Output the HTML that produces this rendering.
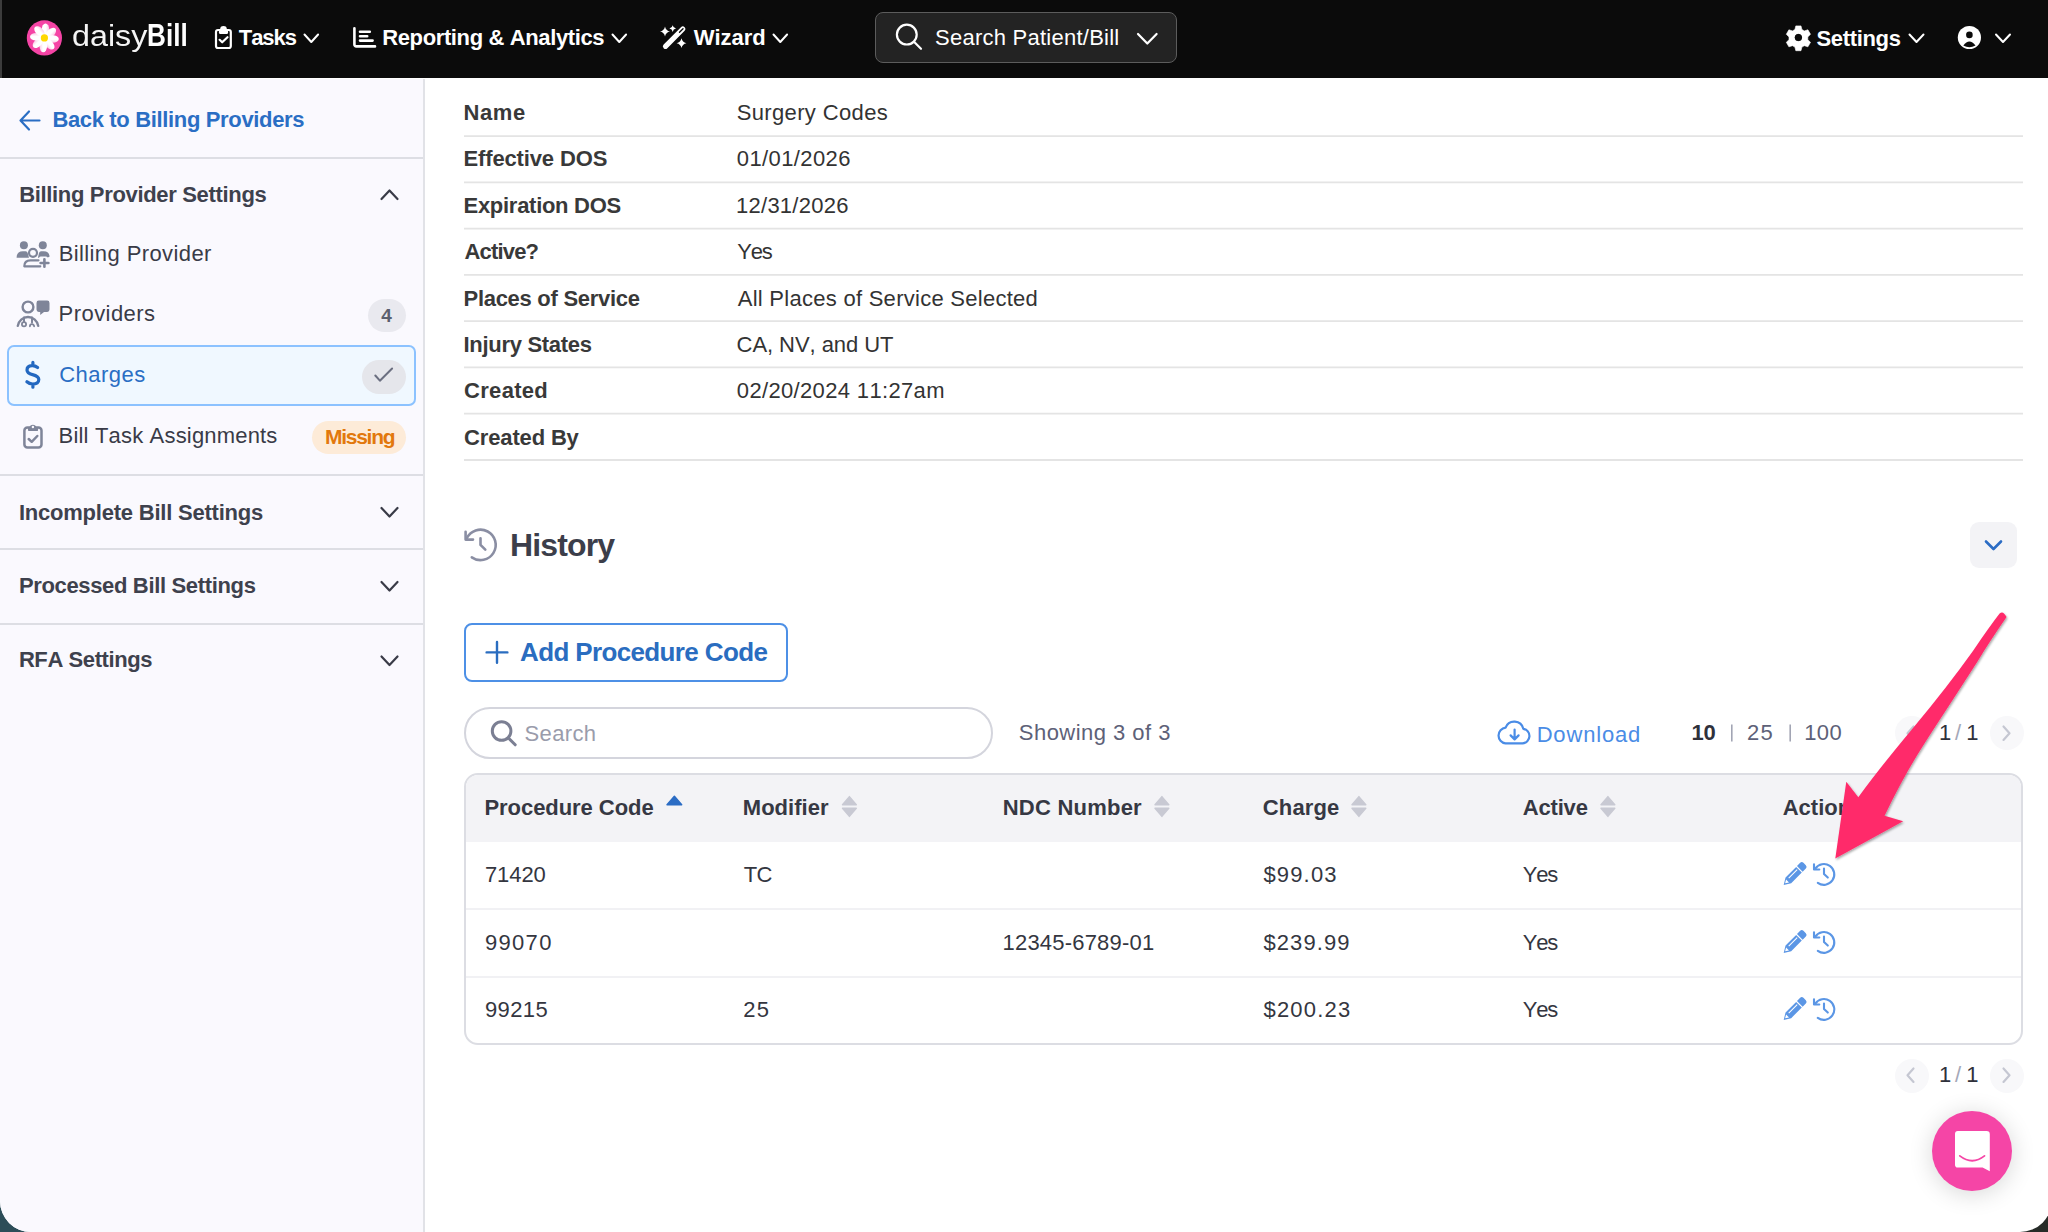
<!DOCTYPE html>
<html><head><meta charset="utf-8"><title>daisyBill</title>
<style>
html,body{margin:0;padding:0;}
body{width:2048px;height:1232px;overflow:hidden;position:relative;background:#2c4d58;font-family:"Liberation Sans",sans-serif;}
#win{position:absolute;left:0;top:0;width:2052px;height:1232px;background:#ffffff;border-radius:0 0 32px 31px;overflow:hidden;}
.a{position:absolute;}
.t{position:absolute;white-space:nowrap;font-family:"Liberation Sans",sans-serif;font-kerning:none;font-feature-settings:"kern" 0,"liga" 0;}
svg{position:absolute;overflow:visible;}
.hl{position:absolute;left:464px;width:1559px;height:2px;background:#e6e6e6;}
.sd{position:absolute;left:0;width:423px;height:2px;background:#dddee4;}
</style></head><body>
<div class="a" style="left:1900px;top:1150px;width:148px;height:82px;background:#262b28;"></div>
<div id="win">
<!-- header -->
<div class="a" style="left:0;top:0;width:2052px;height:78px;background:#0b0b0b;"></div>
<div class="a" style="left:0;top:0;width:2px;height:78px;background:#3c3c3c;"></div>
<!-- sidebar -->
<div class="a" style="left:0;top:79px;width:423px;height:1153px;background:#faf9fe;"></div>
<div class="a" style="left:423px;top:79px;width:2px;height:1153px;background:#e1e2e7;"></div>
<div class="sd" style="top:157px"></div>
<div class="sd" style="top:474px"></div>
<div class="sd" style="top:548px"></div>
<div class="sd" style="top:623px"></div>
<div class="a" style="left:7px;top:345px;width:405px;height:57px;border:2px solid #8cc2ff;border-radius:7px;background:#f0f8ff;"></div>
<div class="a" style="left:368px;top:299px;width:38px;height:33px;border-radius:17px;background:#e9e9ef;"></div>
<div class="a" style="left:362px;top:360px;width:44px;height:34px;border-radius:17px;background:#e5e6eb;"></div>
<div class="a" style="left:312px;top:421px;width:94px;height:33px;border-radius:17px;background:#fdebd8;"></div>
<!-- details -->
<svg style="left:0;top:0" width="2052" height="500"><path d="M464 136.10 H2023 M464 182.37 H2023 M464 228.64 H2023 M464 274.91 H2023 M464 321.18 H2023 M464 367.45 H2023 M464 413.72 H2023 M464 459.99 H2023" stroke="#e4e4e4" stroke-width="1.8"/></svg>
<!-- collapse btn -->
<div class="a" style="left:1970px;top:522px;width:47px;height:46px;border-radius:9px;background:#f3f3f6;"></div>
<!-- add button -->
<div class="a" style="left:464px;top:623px;width:320px;height:55px;border:2px solid #4d90e6;border-radius:8px;"></div>
<!-- search input -->
<div class="a" style="left:464px;top:707px;width:525px;height:48px;border:2px solid #d4d5dd;border-radius:26px;"></div>
<!-- page size separators -->
<svg style="left:0;top:0" width="2052" height="1232"><path d="M1731.8 724.5 V741.5 M1790.2 724.5 V741.5" stroke="#a2a5b4" stroke-width="1.6"/></svg>
<!-- pager circles -->
<div class="a" style="left:1895px;top:716px;width:34px;height:34px;border-radius:50%;background:#f8f8fa;"></div>
<div class="a" style="left:1990px;top:716px;width:34px;height:34px;border-radius:50%;background:#f8f8fa;"></div>
<div class="a" style="left:1895px;top:1059px;width:34px;height:34px;border-radius:50%;background:#f8f8fa;"></div>
<div class="a" style="left:1990px;top:1059px;width:34px;height:34px;border-radius:50%;background:#f8f8fa;"></div>
<!-- table -->
<div class="a" style="left:464px;top:773px;width:1555px;height:268px;border:2px solid #dcdde3;border-radius:14px;overflow:hidden;background:#fff;">
  <div class="a" style="left:0;top:0;width:1555px;height:67px;background:#f3f3f6;"></div>
  <div class="a" style="left:0;top:133px;width:1555px;height:2px;background:#f1f1f4;"></div>
  <div class="a" style="left:0;top:200.5px;width:1555px;height:2px;background:#f1f1f4;"></div>
</div>
<div class="t" style="left:71.66px;top:21.20px;font-size:30px;line-height:30px;color:#f4f4f4;transform:scaleX(1.0754);transform-origin:0 0;">daisy</div>
<div class="t" style="left:147.01px;top:20.35px;font-size:31px;line-height:31px;color:#ffffff;font-weight:700;transform:scaleX(0.8432);transform-origin:0 0;">Bill</div>
<!-- logo flower -->
<svg style="left:0;top:0" width="100" height="78">
  <defs><linearGradient id="pg" x1="0" y1="0" x2="1" y2="0"><stop offset="0" stop-color="#ffffff"/><stop offset="0.55" stop-color="#ffffff"/><stop offset="1" stop-color="#fbc9e4"/></linearGradient></defs>
  <circle cx="44.4" cy="37.9" r="17.6" fill="#f544a5"/>
  <g transform="translate(44.4 37.9)"><ellipse cx="1.1" cy="-8.1" rx="3.8" ry="6.3" fill="url(#pg)" transform="rotate(0)"/><ellipse cx="1.1" cy="-8.1" rx="3.8" ry="6.3" fill="url(#pg)" transform="rotate(45)"/><ellipse cx="1.1" cy="-8.1" rx="3.8" ry="6.3" fill="url(#pg)" transform="rotate(90)"/><ellipse cx="1.1" cy="-8.1" rx="3.8" ry="6.3" fill="url(#pg)" transform="rotate(135)"/><ellipse cx="1.1" cy="-8.1" rx="3.8" ry="6.3" fill="url(#pg)" transform="rotate(180)"/><ellipse cx="1.1" cy="-8.1" rx="3.8" ry="6.3" fill="url(#pg)" transform="rotate(225)"/><ellipse cx="1.1" cy="-8.1" rx="3.8" ry="6.3" fill="url(#pg)" transform="rotate(270)"/><ellipse cx="1.1" cy="-8.1" rx="3.8" ry="6.3" fill="url(#pg)" transform="rotate(315)"/>
    <circle cx="0" cy="0" r="3.6" fill="#ffd800"/>
  </g>
</svg>
<!-- tasks clipboard -->
<svg style="left:0;top:0" width="800" height="78" fill="none" stroke="#fff" stroke-width="2.2" stroke-linecap="round" stroke-linejoin="round">
  <rect x="216" y="30" width="14.8" height="18" rx="2"/>
  <path d="M220 30.5 v2.3 h7 v-2.3 M221.2 29.5 a2.3 2.3 0 0 1 4.6 0" fill="#fff"/>
  <path d="M219.6 39.8 l2.6 2.5 l5.3 -5.1"/>
  <!-- chevrons -->
  <path d="M304.5 34.5 l6.8 7.5 l6.8 -7.5" stroke-width="2"/>
  <path d="M612.5 34.5 l6.8 7.5 l6.8 -7.5" stroke-width="2"/>
  <path d="M773.5 34.5 l6.8 7.5 l6.8 -7.5" stroke-width="2"/>
  <!-- reporting -->
  <path d="M354.4 28.3 V44.6 a1.8 1.8 0 0 0 1.8 1.8 H375" stroke-width="2.6"/>
  <path d="M360 31.7 H369.8 M360 36.3 H367.2 M360 40.6 H372.6" stroke-width="2.6"/>
  <!-- wizard wand -->
  <path d="M665.5 46.3 L682.8 29" stroke-width="5.2"/>
  <path d="M679.5 32.3 L683 28.8" stroke="#0b0b0b" stroke-width="1.4"/>
</svg>
<svg style="left:0;top:0" width="800" height="78" fill="#fff">
  <path d="M665 26.5 Q665.8 30.7 670 31.5 Q665.8 32.3 665 36.5 Q664.2 32.3 660 31.5 Q664.2 30.7 665 26.5Z"/>
  <path d="M672.7 25.3 Q673.2 28.1 676 28.6 Q673.2 29.1 672.7 31.9 Q672.2 29.1 669.4 28.6 Q672.2 28.1 672.7 25.3Z"/>
  <path d="M681.5 38.3 Q682.3 42.4 686.4 43.2 Q682.3 44 681.5 48.1 Q680.7 44 676.6 43.2 Q680.7 42.4 681.5 38.3Z"/>
</svg>
<!-- search box -->
<div class="a" style="left:875px;top:12px;width:300px;height:49px;border:1.5px solid #5c5c5c;border-radius:8px;background:#232323;"></div>
<svg style="left:0;top:0" width="1300" height="78" fill="none" stroke="#fff" stroke-width="2.2" stroke-linecap="round" stroke-linejoin="round">
  <circle cx="906.8" cy="34.6" r="9.9"/>
  <path d="M914 41.8 L921 48.8"/>
  <path d="M1138 34 l9.3 9.5 l9.3 -9.5"/>
</svg>
<!-- settings gear -->
<svg style="left:1786px;top:25px" width="26" height="26" viewBox="0 0 26 26">
  <g transform="translate(12.4 12.5)">
    <path fill="#fff" fill-rule="evenodd" d="M-2.6 -11.6 h5.2 l0.9 3.6 l2.4 1.4 l3.6 -1.1 l2.6 4.5 l-2.7 2.6 v2.8 l2.7 2.6 l-2.6 4.5 l-3.6 -1.1 l-2.4 1.4 l-0.9 3.6 h-5.2 l-0.9 -3.6 l-2.4 -1.4 l-3.6 1.1 l-2.6 -4.5 l2.7 -2.6 v-2.8 l-2.7 -2.6 l2.6 -4.5 l3.6 1.1 l2.4 -1.4 Z M0 -3.7 a3.7 3.7 0 1 0 0.01 0Z" stroke="#fff" stroke-width="0.6" stroke-linejoin="round"/>
    <circle r="3.6" fill="#0b0b0b"/>
  </g>
</svg>
<svg style="left:0;top:0" width="2052" height="78" fill="none" stroke="#fff" stroke-width="2" stroke-linecap="round" stroke-linejoin="round">
  <path d="M1909.5 34.5 l7 7.5 l7 -7.5"/>
  <path d="M1996 34.5 l7 7.5 l7 -7.5"/>
</svg>
<!-- user circle -->
<svg style="left:1957px;top:25px" width="25" height="25" viewBox="0 0 25 25">
  <circle cx="12.4" cy="12.5" r="11.6" fill="#fff"/>
  <circle cx="12.4" cy="9.9" r="3.3" fill="#0b0b0b"/>
  <path d="M6.3 20.5 Q12.4 12.5 18.5 20.5 Q12.4 23.8 6.3 20.5Z" fill="#0b0b0b"/>
</svg>

<!-- sidebar icons -->
<svg style="left:0;top:0" width="423" height="700" fill="none" stroke-linecap="round" stroke-linejoin="round">
  <!-- back arrow -->
  <path d="M21 120.5 H39.5 M29 111.5 L20.5 120.5 L29 129.5" stroke="#2a6ec4" stroke-width="2.2"/>
  <!-- chevrons -->
  <path d="M381.5 199 l8 -8.5 l8 8.5" stroke="#393b47" stroke-width="2.2"/>
  <path d="M381.5 508 l8 8.5 l8 -8.5" stroke="#393b47" stroke-width="2.2"/>
  <path d="M381.5 582 l8 8.5 l8 -8.5" stroke="#393b47" stroke-width="2.2"/>
  <path d="M381.5 656.5 l8 8.5 l8 -8.5" stroke="#393b47" stroke-width="2.2"/>
  <!-- billing provider icon -->
  <g fill="#7f8599">
    <circle cx="23.9" cy="245.2" r="4"/>
    <circle cx="42.8" cy="245.2" r="4"/>
    <path d="M16.6 257.8 Q16.6 251.2 22.8 251.2 H25.6 Q27.2 251.2 27.7 253 L29 257.8Z"/>
    <path d="M37.9 257.8 L39 253 Q39.5 251.2 41.1 251.2 H43.6 Q49.5 251.2 49.5 256.7 L47.8 257.6 Q46.8 256.6 45.8 256.6 H40.8 Q39.7 256.6 39 257.8Z"/>
  </g>
  <g stroke="#7f8599" stroke-width="2.2">
    <circle cx="33" cy="252.8" r="4"/>
    <path d="M24.3 266.3 Q24.3 260.3 30.5 260.3 H38.5 M24.3 266.3 H40.3"/>
    <path d="M44.4 259.2 V266.8 M40.6 263 H48.4" stroke-width="2.6"/>
  </g>
  <!-- providers icon -->
  <g stroke="#7f8599" stroke-width="2.4">
    <circle cx="28" cy="307" r="5.4"/>
    <path d="M17.8 325.9 A10.3 10.3 0 0 1 38.2 325.9"/>
    <path d="M24 317.5 V322 M32 317.5 V322.5" stroke-width="2"/>
    <circle cx="24" cy="324.3" r="2.1" stroke-width="1.8"/>
    <path d="M29.9 326.3 a2.1 2.1 0 1 1 4.2 0" stroke-width="1.8"/>
  </g>
  <path d="M38.8 300.6 H47.2 a2.3 2.3 0 0 1 2.3 2.3 V309.6 a2.3 2.3 0 0 1 -2.3 2.3 H44 L40.2 315 V311.9 H38.8 a2.3 2.3 0 0 1 -2.3 -2.3 V302.9 a2.3 2.3 0 0 1 2.3 -2.3Z" fill="#7f8599"/>
  <!-- dollar -->
  <path d="M37.6 367.6 Q35 365.5 32 365.7 Q26.9 366 27 370.2 Q27.2 373.4 32.5 374.6 Q38.6 376 38.8 379.4 Q38.9 384 32.6 384 Q29.3 383.9 26.9 381.8 M32.9 362.4 V365.4 M32.9 384 V387.2" stroke="#2368c0" stroke-width="3.2"/>
  <!-- check pill mark -->
  <path d="M375.3 375.5 l4.6 5.2 l12.2 -12.2" stroke="#6b6f80" stroke-width="2"/>
  <!-- clipboard -->
  <g stroke="#7f8599" stroke-width="2.5">
    <rect x="24.4" y="427.4" width="17.1" height="20.1" rx="3"/>
    <path d="M28.7 439 l3 2.8 l5.6 -5.8"/>
  </g>
  <path d="M27.6 427.5 H29.4 A3.6 3.6 0 0 1 36.4 427.5 H38.5 L37.8 430.9 H28.3Z" fill="#7f8599"/>
  <circle cx="32.9" cy="427" r="1.2" fill="#faf9fe"/>
</svg>

<!-- history title icon -->
<svg style="left:464px;top:528px" width="36" height="36" viewBox="0 0 36 36" fill="none" stroke="#8a8ea3" stroke-width="2.6" stroke-linecap="round" stroke-linejoin="round">
  <path d="M2.7 10.5 A15.2 15.2 0 1 1 7.8 29.35"/>
  <path d="M1.6 3.8 V11.6 H9"/>
  <path d="M16.5 10.3 V16.9 L21.3 21.7"/>
</svg>
<!-- collapse chevron -->
<svg style="left:0;top:0" width="2052" height="1232" fill="none" stroke-linecap="round" stroke-linejoin="round">
  <path d="M1986 541.5 l7.5 7.5 l7.5 -7.5" stroke="#2b6cc4" stroke-width="2.6"/>
  <!-- plus -->
  <path d="M497 642 V662.8 M486.6 652.4 H507.4" stroke="#2a6dc0" stroke-width="2.4"/>
  <!-- search icon -->
  <circle cx="501.6" cy="731" r="9.3" stroke="#7b7f93" stroke-width="3"/>
  <path d="M508.5 738 L515.2 744.8" stroke="#7b7f93" stroke-width="3"/>
  <!-- download cloud -->
  <path d="M1505.5 743.3 H1522.5 A7.3 7.3 0 0 0 1523.3 728.8 A9.3 9.3 0 0 0 1505.6 727.6 A7.9 7.9 0 0 0 1505.5 743.3Z" stroke="#4a8ce6" stroke-width="2.2"/>
  <path d="M1514.6 729.5 V739.3 M1510.6 735.4 l4 4 l4 -4" stroke="#4a8ce6" stroke-width="2.2"/>
  <!-- pager chevrons -->
  <path d="M1913.5 726.5 l-6 6.7 l6 6.7" stroke="#c5c7d2" stroke-width="2.2"/>
  <path d="M2003.5 726.5 l6 6.7 l-6 6.7" stroke="#c5c7d2" stroke-width="2.2"/>
  <path d="M1913.5 1068.5 l-6 6.7 l6 6.7" stroke="#c5c7d2" stroke-width="2.2"/>
  <path d="M2003.5 1068.5 l6 6.7 l-6 6.7" stroke="#c5c7d2" stroke-width="2.2"/>
</svg>
<!-- sort icons -->
<svg style="left:0;top:0" width="2052" height="1232">
  <path d="M667 804.8 L674.4 796.2 L681.7 804.8Z" fill="#2b6cc4" stroke="#2b6cc4" stroke-width="1.4" stroke-linejoin="round"/>
  <g fill="#c8c9d3" stroke="#c8c9d3" stroke-width="1.4" stroke-linejoin="round">
    <path d="M842.5 804.8 L849.4 796.6 L856.3 804.8Z M842.5 808.2 L849.4 816.4 L856.3 808.2Z"/>
    <path d="M1155 804.8 L1161.9 796.6 L1168.8 804.8Z M1155 808.2 L1161.9 816.4 L1168.8 808.2Z"/>
    <path d="M1352 804.8 L1358.9 796.6 L1365.8 804.8Z M1352 808.2 L1358.9 816.4 L1365.8 808.2Z"/>
    <path d="M1601 804.8 L1607.9 796.6 L1614.8 804.8Z M1601 808.2 L1607.9 816.4 L1614.8 808.2Z"/>
  </g>
</svg>
<!-- action icons -->
<svg style="left:1780px;top:860px" width="60" height="30" viewBox="0 0 60 30" id="act1"><g id="act1g">
  <g transform="translate(3.7 25) rotate(-45)">
    <path fill="#5b96e5" fill-rule="evenodd" d="M0 0 L6.6 -4 H21.6 V4 H6.6 Z M2.2 -0.2 L5.6 -2.2 V1.9 Z"/>
    <rect x="8.4" y="-1.9" width="12" height="1.1" fill="#ffffff"/>
    <path fill="#5b96e5" d="M22.8 -4 H27.3 a2.3 2.3 0 0 1 2.3 2.3 V1.7 a2.3 2.3 0 0 1 -2.3 2.3 H22.8Z"/>
  </g>
  <g fill="none" stroke="#5b96e5" stroke-width="2.1" stroke-linecap="round" stroke-linejoin="round">
    <path d="M35.3 8.6 A10.4 10.4 0 1 1 37.8 22.9"/>
    <path d="M34 4.3 V9.5 H39.3"/>
    <path d="M44 8.6 V14 L47.8 17.6"/>
  </g></g>
</svg>

<div class="t" id="nav1" style="left:238.75px;top:26.77px;font-size:22px;line-height:22px;color:#ffffff;font-weight:700;letter-spacing:-1.062px;">Tasks</div>
<div class="t" id="nav2" style="left:382.20px;top:26.77px;font-size:22px;line-height:22px;color:#ffffff;font-weight:700;letter-spacing:-0.370px;">Reporting &amp; Analytics</div>
<div class="t" id="nav3" style="left:693.80px;top:26.77px;font-size:22px;line-height:22px;color:#ffffff;font-weight:700;letter-spacing:-0.065px;">Wizard</div>
<div class="t" id="srch" style="left:935.00px;top:27.37px;font-size:22px;line-height:22px;color:#ffffff;letter-spacing:0.247px;">Search Patient/Bill</div>
<div class="t" id="sett" style="left:1816.38px;top:27.57px;font-size:22px;line-height:22px;color:#ffffff;font-weight:700;letter-spacing:-0.321px;">Settings</div>
<div class="t" id="back" style="left:52.40px;top:109.17px;font-size:22px;line-height:22px;color:#2a6ec4;font-weight:700;letter-spacing:-0.347px;">Back to Billing Providers</div>
<div class="t" id="sec1" style="left:19.20px;top:183.57px;font-size:22px;line-height:22px;color:#3e414d;font-weight:700;letter-spacing:-0.330px;">Billing Provider Settings</div>
<div class="t" id="it1" style="left:58.65px;top:243.17px;font-size:22px;line-height:22px;color:#393b47;letter-spacing:0.398px;">Billing Provider</div>
<div class="t" id="it2" style="left:58.55px;top:302.97px;font-size:22px;line-height:22px;color:#393b47;letter-spacing:0.453px;">Providers</div>
<div class="t" id="it3" style="left:59.17px;top:363.87px;font-size:22px;line-height:22px;color:#2a6ec4;letter-spacing:0.475px;">Charges</div>
<div class="t" id="it4" style="left:58.55px;top:425.17px;font-size:22px;line-height:22px;color:#393b47;letter-spacing:0.182px;">Bill Task Assignments</div>
<div class="t" id="miss" style="left:325.12px;top:426.42px;font-size:21px;line-height:21px;color:#e2780c;font-weight:700;letter-spacing:-1.300px;">Missing</div>
<div class="t" id="bdg4" style="left:381.25px;top:305.51px;font-size:19px;line-height:19px;color:#5b5f6e;font-weight:700;">4</div>
<div class="t" id="sec2" style="left:18.90px;top:501.77px;font-size:22px;line-height:22px;color:#3e414d;font-weight:700;letter-spacing:-0.217px;">Incomplete Bill Settings</div>
<div class="t" id="sec3" style="left:18.90px;top:575.27px;font-size:22px;line-height:22px;color:#3e414d;font-weight:700;letter-spacing:-0.342px;">Processed Bill Settings</div>
<div class="t" id="sec4" style="left:18.90px;top:649.37px;font-size:22px;line-height:22px;color:#3e414d;font-weight:700;letter-spacing:-0.414px;">RFA Settings</div>
<div class="t" id="l1" style="left:463.50px;top:102.17px;font-size:22px;line-height:22px;color:#393939;font-weight:700;letter-spacing:0.617px;">Name</div>
<div class="t" id="l2" style="left:463.50px;top:148.47px;font-size:22px;line-height:22px;color:#393939;font-weight:700;letter-spacing:-0.137px;">Effective DOS</div>
<div class="t" id="l3" style="left:463.50px;top:194.87px;font-size:22px;line-height:22px;color:#393939;font-weight:700;letter-spacing:-0.279px;">Expiration DOS</div>
<div class="t" id="l4" style="left:464.50px;top:241.17px;font-size:22px;line-height:22px;color:#393939;font-weight:700;letter-spacing:-0.821px;">Active?</div>
<div class="t" id="l5" style="left:463.50px;top:287.57px;font-size:22px;line-height:22px;color:#393939;font-weight:700;letter-spacing:-0.284px;">Places of Service</div>
<div class="t" id="l6" style="left:463.50px;top:333.87px;font-size:22px;line-height:22px;color:#393939;font-weight:700;letter-spacing:-0.296px;">Injury States</div>
<div class="t" id="l7" style="left:464.12px;top:380.27px;font-size:22px;line-height:22px;color:#393939;font-weight:700;letter-spacing:0.279px;">Created</div>
<div class="t" id="l8" style="left:464.12px;top:426.57px;font-size:22px;line-height:22px;color:#393939;font-weight:700;letter-spacing:-0.158px;">Created By</div>
<div class="t" id="v1" style="left:736.70px;top:102.17px;font-size:22px;line-height:22px;color:#333333;letter-spacing:0.358px;">Surgery Codes</div>
<div class="t" id="v2" style="left:736.83px;top:148.47px;font-size:22px;line-height:22px;color:#333333;letter-spacing:0.383px;">01/01/2026</div>
<div class="t" id="v3" style="left:736.08px;top:194.87px;font-size:22px;line-height:22px;color:#333333;letter-spacing:0.244px;">12/31/2026</div>
<div class="t" id="v4" style="left:737.20px;top:241.17px;font-size:22px;line-height:22px;color:#333333;letter-spacing:-1.163px;">Yes</div>
<div class="t" id="v5" style="left:737.70px;top:287.57px;font-size:22px;line-height:22px;color:#333333;letter-spacing:0.273px;">All Places of Service Selected</div>
<div class="t" id="v6" style="left:736.58px;top:333.87px;font-size:22px;line-height:22px;color:#333333;letter-spacing:-0.063px;">CA, NV, and UT</div>
<div class="t" id="v7" style="left:736.83px;top:380.27px;font-size:22px;line-height:22px;color:#333333;letter-spacing:0.341px;">02/20/2024 11:27am</div>
<div class="t" id="hist" style="left:509.98px;top:528.81px;font-size:32px;line-height:32px;color:#3c3e4a;font-weight:700;letter-spacing:-0.850px;">History</div>
<div class="t" id="addp" style="left:520.08px;top:638.79px;font-size:26px;line-height:26px;color:#2a6dc0;font-weight:700;letter-spacing:-0.637px;">Add Procedure Code</div>
<div class="t" id="ph" style="left:524.50px;top:722.57px;font-size:22px;line-height:22px;color:#9a9cab;letter-spacing:0.365px;">Search</div>
<div class="t" id="show" style="left:1018.80px;top:721.97px;font-size:22px;line-height:22px;color:#5d6178;letter-spacing:0.467px;">Showing 3 of 3</div>
<div class="t" id="dl" style="left:1536.65px;top:724.27px;font-size:22px;line-height:22px;color:#4a8ce6;letter-spacing:0.836px;">Download</div>
<div class="t" id="p10" style="left:1691.62px;top:721.97px;font-size:22px;line-height:22px;color:#2f313b;font-weight:700;letter-spacing:-0.250px;">10</div>
<div class="t" id="p25" style="left:1746.88px;top:721.97px;font-size:22px;line-height:22px;color:#5d6178;letter-spacing:1.300px;">25</div>
<div class="t" id="p100" style="left:1804.17px;top:721.97px;font-size:22px;line-height:22px;color:#5d6178;letter-spacing:0.475px;">100</div>
<div class="t" id="pg1a" style="left:1938.88px;top:722.27px;font-size:22px;line-height:22px;color:#2f313b;">1</div>
<div class="t" id="pg1s" style="left:1955.00px;top:722.27px;font-size:22px;line-height:22px;color:#a5a8b8;">/</div>
<div class="t" id="pg1b" style="left:1966.17px;top:722.27px;font-size:22px;line-height:22px;color:#2f313b;">1</div>
<div class="t" id="pg2a" style="left:1938.88px;top:1063.87px;font-size:22px;line-height:22px;color:#2f313b;">1</div>
<div class="t" id="pg2s" style="left:1955.00px;top:1063.87px;font-size:22px;line-height:22px;color:#a5a8b8;">/</div>
<div class="t" id="pg2b" style="left:1966.17px;top:1063.87px;font-size:22px;line-height:22px;color:#2f313b;">1</div>
<div class="t" id="th1" style="left:484.50px;top:796.57px;font-size:22px;line-height:22px;color:#363843;font-weight:700;letter-spacing:-0.058px;">Procedure Code</div>
<div class="t" id="th2" style="left:742.80px;top:796.57px;font-size:22px;line-height:22px;color:#363843;font-weight:700;letter-spacing:0.021px;">Modifier</div>
<div class="t" id="th3" style="left:1002.70px;top:796.57px;font-size:22px;line-height:22px;color:#363843;font-weight:700;letter-spacing:0.231px;">NDC Number</div>
<div class="t" id="th4" style="left:1262.83px;top:796.57px;font-size:22px;line-height:22px;color:#363843;font-weight:700;letter-spacing:0.130px;">Charge</div>
<div class="t" id="th5" style="left:1522.70px;top:796.57px;font-size:22px;line-height:22px;color:#363843;font-weight:700;letter-spacing:-0.170px;">Active</div>
<div class="t" id="th6" style="left:1782.70px;top:796.57px;font-size:22px;line-height:22px;color:#363843;font-weight:700;">Actions</div>
<div class="t" id="r1c1" style="left:484.88px;top:864.37px;font-size:22px;line-height:22px;color:#34363f;letter-spacing:-0.062px;">71420</div>
<div class="t" id="r1c2" style="left:743.80px;top:864.37px;font-size:22px;line-height:22px;color:#34363f;letter-spacing:-0.800px;">TC</div>
<div class="t" id="r1c4" style="left:1263.45px;top:864.37px;font-size:22px;line-height:22px;color:#34363f;letter-spacing:1.160px;">$99.03</div>
<div class="t" id="r1c5" style="left:1522.70px;top:864.37px;font-size:22px;line-height:22px;color:#34363f;letter-spacing:-1.113px;">Yes</div>
<div class="t" id="r2c1" style="left:485.00px;top:931.87px;font-size:22px;line-height:22px;color:#34363f;letter-spacing:1.300px;">99070</div>
<div class="t" id="r2c3" style="left:1002.58px;top:931.87px;font-size:22px;line-height:22px;color:#34363f;letter-spacing:0.192px;">12345-6789-01</div>
<div class="t" id="r2c4" style="left:1263.45px;top:931.87px;font-size:22px;line-height:22px;color:#34363f;letter-spacing:1.092px;">$239.99</div>
<div class="t" id="r2c5" style="left:1522.70px;top:931.87px;font-size:22px;line-height:22px;color:#34363f;letter-spacing:-1.113px;">Yes</div>
<div class="t" id="r3c1" style="left:485.00px;top:999.37px;font-size:22px;line-height:22px;color:#34363f;letter-spacing:0.381px;">99215</div>
<div class="t" id="r3c2" style="left:743.17px;top:999.37px;font-size:22px;line-height:22px;color:#34363f;letter-spacing:1.300px;">25</div>
<div class="t" id="r3c4" style="left:1263.45px;top:999.37px;font-size:22px;line-height:22px;color:#34363f;letter-spacing:1.225px;">$200.23</div>
<div class="t" id="r3c5" style="left:1522.70px;top:999.37px;font-size:22px;line-height:22px;color:#34363f;letter-spacing:-1.113px;">Yes</div>
<!-- action icons rows 2,3 -->
<svg style="left:1780px;top:927.5px" width="60" height="30" viewBox="0 0 60 30"><use href="#act1g"/></svg>
<svg style="left:1780px;top:995px" width="60" height="30" viewBox="0 0 60 30"><use href="#act1g"/></svg>
<!-- arrow -->
<svg style="left:0;top:0" width="2052" height="1232">
  <defs>
    <filter id="sh" x="-20%" y="-20%" width="140%" height="140%">
      <feDropShadow dx="1" dy="1.5" stdDeviation="1.2" flood-color="#000" flood-opacity="0.35"/>
    </filter>
  </defs>
  <path filter="url(#sh)" fill="#ff2c6b" d="M1999.6 613.6 Q2003 610 2006.6 617.1 Q1990 641 1977.7 661.3 Q1958 692 1925.1 742.4 Q1903 777 1884.6 815.8 L1903.2 821.2 L1835.3 858.5 L1846.3 781.8 L1858.3 797.2 Q1878 770 1912 729.2 Q1948 686 1973.3 650.4 Q1990 626 1999.6 613.6Z"/>
</svg>
<!-- chat bubble -->
<div class="a" style="left:1932px;top:1111px;width:80px;height:80px;border-radius:50%;background:#f545a6;box-shadow:0 3px 24px rgba(0,0,0,0.16);"></div>
<svg style="left:1950px;top:1126px" width="44" height="50" viewBox="0 0 44 50">
  <path d="M7.8 5 H36.6 a3.2 3.2 0 0 1 3.2 3.2 V45.3 L32.6 41.6 H7.8 a2.8 2.8 0 0 1 -2.8 -2.8 V8 a3 3 0 0 1 2.8 -3Z" fill="#fff"/>
  <path d="M9.8 29.9 Q22.2 39.5 34.5 29.9" fill="none" stroke="#f545a6" stroke-width="1.8" stroke-linecap="round"/>
</svg>

</div>
</body></html>
